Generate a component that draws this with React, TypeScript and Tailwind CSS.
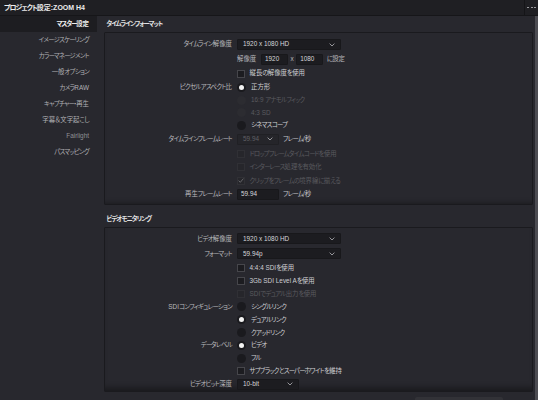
import React from "react";

function T({ s, bold }: { s: string; bold?: boolean }) {
  const parts = s.split(/([\x00-\x7F]+|[ー]+|[\u3040-\u30FB\u30FD-\u30FF]+)/).filter(Boolean);
  return (
    <>
      {parts.map((p, i) => {
        if (/^[\x00-\x7F]+$/.test(p)) return <span key={i}>{p}</span>;
        if (/^ー+$/.test(p)) return <span key={i} className="tracking-[-1.2px]">{p}</span>;
        if (/^[\u3040-\u30FB\u30FD-\u30FF]+$/.test(p))
          return (
            <span key={i} className={bold ? "tracking-[-1px]" : "tracking-[-0.7px]"}>
              {p}
            </span>
          );
        return <span key={i}>{p}</span>;
      })}
    </>
  );
}

const Chevron = () => (
  <svg width="6" height="4" viewBox="0 0 6 4" className="shrink-0">
    <polyline points="0.6,0.6 3,3 5.4,0.6" fill="none" stroke="#a4a4a8" strokeWidth="0.9" />
  </svg>
);

function Row({ h, label, children }: { h: string; label?: string; children?: React.ReactNode }) {
  return (
    <div className={`flex items-center ${h}`}>
      <div className="w-[132px] shrink-0 pr-[5px] text-right text-[#b8b8bc] whitespace-nowrap">
        {label && <T s={label} />}
      </div>
      <div className="flex items-center">{children}</div>
    </div>
  );
}

function Select({ w, value, disabled }: { w: string; value: string; disabled?: boolean }) {
  return (
    <div
      className={`${w} h-[11px] flex items-center justify-between pl-[5px] pr-[5px] rounded-[1px] border ${
        disabled ? "bg-[#25252a] border-[#202024] text-[#606065]" : "bg-[#1c1c20] border-[#18181b] text-[#d6d6da]"
      }`}
    >
      <span>{value}</span>
      <Chevron />
    </div>
  );
}

function Input({ w, value }: { w: string; value: string }) {
  return (
    <div className={`${w} h-[11px] flex items-center pl-[3px] bg-[#1c1c20] border border-[#18181b] rounded-[1px] text-[#d6d6da]`}>
      {value}
    </div>
  );
}

function Check({ text, disabled, checked }: { text: string; disabled?: boolean; checked?: boolean }) {
  return (
    <div className="flex items-center gap-[4.5px]">
      <span
        className={`w-[8px] h-[8px] flex items-center justify-center border ${
          disabled ? "border-[#303035] bg-[#26262b]" : "border-[#46464b] bg-[#1c1c20]"
        }`}
      >
        {checked && (
          <svg width="6" height="5" viewBox="0 0 6 5">
            <polyline points="0.6,2.6 2.3,4.3 5.4,0.6" fill="none" stroke="#6c6c70" strokeWidth="0.9" />
          </svg>
        )}
      </span>
      <span className={`whitespace-nowrap ${disabled ? "text-[#5a5a5f]" : "text-[#cfcfd3]"}`}>
        <T s={text} />
      </span>
    </div>
  );
}

function Radio({ text, selected, disabled }: { text: string; selected?: boolean; disabled?: boolean }) {
  return (
    <div className="flex items-center gap-[5px]">
      <span
        className={`w-[9px] h-[9px] rounded-full flex items-center justify-center ${
          disabled ? "bg-[#2c2c31]" : "bg-[#1a1a1e]"
        }`}
      >
        {selected && <span className="w-[5px] h-[5px] rounded-full bg-[#f2f2f2]" />}
      </span>
      <span className={`whitespace-nowrap ${disabled ? "text-[#5a5a5f]" : "text-[#cfcfd3]"}`}>
        <T s={text} />
      </span>
    </div>
  );
}

const sideItems = [
  "マスター設定",
  "イメージスケーリング",
  "カラーマネージメント",
  "一般オプション",
  "カメラRAW",
  "キャプチャー・再生",
  "字幕＆文字起こし",
  "Fairlight",
  "パスマッピング",
];

export default function App() {
  return (
    <div className="w-[538px] h-[400px] overflow-hidden bg-[#28282e] flex flex-col font-['Liberation_Sans','Noto_Sans_CJK_JP',sans-serif] text-[6.4px] leading-none [font-feature-settings:'palt']">
      {/* title bar */}
      <div className="h-[16px] shrink-0 flex items-stretch bg-[#1f1f23] border-b border-[#161619]">
        <div className="flex-1 flex items-center pl-[4px] font-bold text-[7px] text-[#ececec]">
          <T s="プロジェクト設定 :ZOOM H4" bold />
        </div>
        <div className="w-[14px] border-l border-[#151518] flex items-center justify-center gap-[1.5px]">
          <span className="w-[2px] h-[1.5px] bg-[#9a9a9e]" />
          <span className="w-[2px] h-[1.5px] bg-[#9a9a9e]" />
          <span className="w-[2px] h-[1.5px] bg-[#9a9a9e]" />
        </div>
      </div>

      <div className="flex flex-1 min-h-0">
        {/* sidebar */}
        <div className="w-[97px] shrink-0 flex flex-col">
          {sideItems.map((s, i) => (
            <div
              key={s}
              className={`h-[16px] flex items-center justify-end pr-[8px] whitespace-nowrap ${
                i === 0 ? "bg-[#1d1d21] text-[#f0f0f0] font-bold" : s === "Fairlight" ? "text-[#909094]" : "text-[#b0b0b4]"
              }`}
            >
              <T s={s} bold={i === 0} />
            </div>
          ))}
        </div>

        {/* main */}
        <div className="flex-1 min-w-0 flex flex-col pl-[7px]">
          <div className="h-[16px] shrink-0 flex items-center pl-[2.5px] font-bold text-[#e2e2e2]">
            <T s="タイムラインフォーマット" bold />
          </div>
          <div className="shrink-0 border border-[#1a1a1e] rounded-[1px] pt-[4px] pb-[3px] shadow-[inset_0_-5px_5px_-4px_rgba(0,0,0,0.35)]">
            <Row h="h-[15px]" label="タイムライン解像度">
              <Select w="w-[104px]" value="1920 x 1080 HD" />
            </Row>
            <Row h="h-[15px]">
              <span className="text-[#b8b8bc] w-[24px]">
                <T s="解像度" />
              </span>
              <Input w="w-[27px]" value="1920" />
              <span className="text-[#b8b8bc] px-[2.5px]">x</span>
              <Input w="w-[27px]" value="1080" />
              <span className="text-[#b8b8bc] pl-[3.5px]">
                <T s="に設定" />
              </span>
            </Row>
            <Row h="h-[13px]">
              <Check text="縦長の解像度を使用" />
            </Row>
            <Row h="h-[14px]" label="ピクセルアスペクト比">
              <Radio text="正方形" selected />
            </Row>
            <Row h="h-[12.5px]">
              <Radio text="16:9 アナモルフィック" disabled />
            </Row>
            <Row h="h-[12.5px]">
              <Radio text="4:3 SD" disabled />
            </Row>
            <Row h="h-[12px]">
              <Radio text="シネマスコープ" />
            </Row>
            <Row h="h-[16.5px]" label="タイムラインフレームレート">
              <Select w="w-[42px]" value="59.94" disabled />
              <span className="text-[#c4c4c8] pl-[4px]">
                <T s="フレーム/秒" />
              </span>
            </Row>
            <Row h="h-[13.3px]">
              <Check text="ドロップフレームタイムコードを使用" disabled />
            </Row>
            <Row h="h-[13.3px]">
              <Check text="インターレース処理を有効化" disabled />
            </Row>
            <Row h="h-[13.3px]">
              <Check text="クリップをフレームの境界線に揃える" disabled checked />
            </Row>
            <Row h="h-[13.6px]" label="再生フレームレート">
              <Input w="w-[42px]" value="59.94" />
              <span className="text-[#c4c4c8] pl-[4px]">
                <T s="フレーム/秒" />
              </span>
            </Row>
          </div>

          <div className="mt-[5px] h-[17.5px] shrink-0 flex items-center pl-[2.5px] font-bold text-[#e2e2e2]">
            <T s="ビデオモニタリング" bold />
          </div>
          <div className="shrink-0 border border-[#1a1a1e] rounded-[1px] pt-[3.5px] shadow-[inset_0_-7px_6px_-4px_rgba(0,0,0,0.4)]">
            <Row h="h-[14px]" label="ビデオ解像度">
              <Select w="w-[104px]" value="1920 x 1080 HD" />
            </Row>
            <Row h="h-[15.85px]" label="フォーマット">
              <Select w="w-[104px]" value="59.94p" />
            </Row>
            <Row h="h-[12.9px]">
              <Check text="4:4:4 SDIを使用" />
            </Row>
            <Row h="h-[12.9px]">
              <Check text="3Gb SDI Level Aを使用" />
            </Row>
            <Row h="h-[12.9px]">
              <Check text="SDIでデュアル出力を使用" disabled />
            </Row>
            <Row h="h-[12.9px]" label="SDIコンフィギュレーション">
              <Radio text="シングルリンク" />
            </Row>
            <Row h="h-[12.9px]">
              <Radio text="デュアルリンク" selected />
            </Row>
            <Row h="h-[12.9px]">
              <Radio text="クアッドリンク" />
            </Row>
            <Row h="h-[12.9px]" label="データレベル">
              <Radio text="ビデオ" selected />
            </Row>
            <Row h="h-[12.9px]">
              <Radio text="フル" />
            </Row>
            <Row h="h-[12.9px]">
              <Check text="サブブラックとスーパーホワイトを維持" />
            </Row>
            <Row h="h-[13px]" label="ビデオビット深度">
              <Select w="w-[62px]" value="10-bit" />
            </Row>
          </div>
          <div className="shrink-0 flex justify-end pr-[30px] pt-[5px]">
            <div className="w-[88px] h-[12px] rounded-[2px] bg-[#323237]" />
          </div>
        </div>

        {/* scrollbar */}
        <div className="w-[5px] shrink-0 flex justify-end">
          <div className="w-[3px] h-full bg-[#4c4c52]" />
        </div>
      </div>
    </div>
  );
}
